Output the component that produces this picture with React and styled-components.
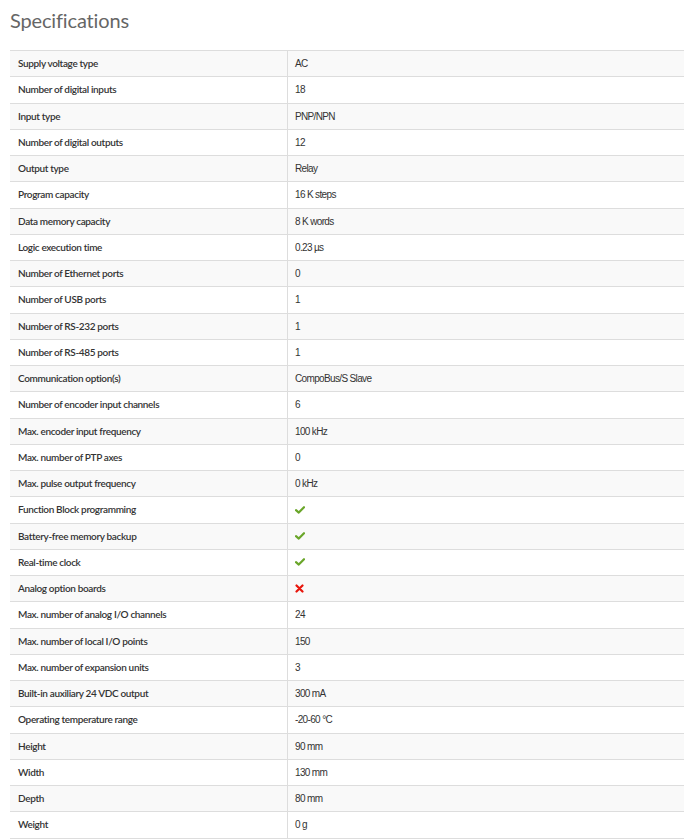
import React from 'react';
import styled, { createGlobalStyle } from 'styled-components';

const GlobalStyle = createGlobalStyle`
  html, body {
    margin: 0;
    padding: 0;
    background: #fff;
  }
`;

const Page = styled.div`
  padding: 0 0 0 10px;
  overflow: hidden;
`;

const Title = styled.h2`
  margin: 0;
  padding-top: 6px;
  height: 50px;
  box-sizing: border-box;
  font-family: Lato, 'Open Sans', sans-serif;
  font-weight: 400;
  font-size: 20px;
  letter-spacing: -0.15px;
  line-height: 28px;
  color: #666;
`;

const Table = styled.table`
  width: 100%;
  border-collapse: collapse;
  border-top: 1px solid #ddd;
`;

const Row = styled.tr`
  background: ${(props) => (props.$striped ? '#f9f9f9' : '#fff')};
  border-bottom: 1px solid #ddd;
`;

const Label = styled.td`
  width: 261px;
  padding: 5px 8px;
  height: 15.25px;
  line-height: 15.25px;
  font-family: Lato, 'Open Sans', sans-serif;
  font-weight: 600;
  font-size: 10px;
  letter-spacing: -0.35px;
  color: #333;
  vertical-align: middle;
`;

const Value = styled.td`
  padding: 5px 8px 5px 7px;
  line-height: 15.25px;
  border-left: 1px solid #ddd;
  font-family: 'Liberation Sans', Arial, sans-serif;
  font-size: 10px;
  letter-spacing: -0.65px;
  color: #333;
  vertical-align: middle;
`;

const Check = () => (
  <svg width="10" height="8" viewBox="0 0 10 8" style={{ display: 'block' }}>
    <path d="M1 4.2 L3.8 6.6 L9 1.2" fill="none" stroke="#6aa62a" strokeWidth="2.2" strokeLinecap="round" strokeLinejoin="round" />
  </svg>
);

const Cross = () => (
  <svg width="9" height="9" viewBox="0 0 9 9" style={{ display: 'block' }}>
    <path d="M1.5 1.5 L7.5 7.5 M7.5 1.5 L1.5 7.5" stroke="#e8160c" strokeWidth="2.2" strokeLinecap="round" />
  </svg>
);

const specs = [
  ['Supply voltage type', 'AC'],
  ['Number of digital inputs', '18'],
  ['Input type', 'PNP/NPN'],
  ['Number of digital outputs', '12'],
  ['Output type', 'Relay'],
  ['Program capacity', '16 K steps'],
  ['Data memory capacity', '8 K words'],
  ['Logic execution time', '0.23 µs'],
  ['Number of Ethernet ports', '0'],
  ['Number of USB ports', '1'],
  ['Number of RS-232 ports', '1'],
  ['Number of RS-485 ports', '1'],
  ['Communication option(s)', 'CompoBus/S Slave'],
  ['Number of encoder input channels', '6'],
  ['Max. encoder input frequency', '100 kHz'],
  ['Max. number of PTP axes', '0'],
  ['Max. pulse output frequency', '0 kHz'],
  ['Function Block programming', true],
  ['Battery-free memory backup', true],
  ['Real-time clock', true],
  ['Analog option boards', false],
  ['Max. number of analog I/O channels', '24'],
  ['Max. number of local I/O points', '150'],
  ['Max. number of expansion units', '3'],
  ['Built-in auxiliary 24 VDC output', '300 mA'],
  ['Operating temperature range', '-20-60 °C'],
  ['Height', '90 mm'],
  ['Width', '130 mm'],
  ['Depth', '80 mm'],
  ['Weight', '0 g'],
];

const renderValue = (v) => {
  if (v === true) return <Check />;
  if (v === false) return <Cross />;
  return v;
};

export default function App() {
  return (
    <>
      <GlobalStyle />
      <Page>
        <Title>Specifications</Title>
        <Table>
          <tbody>
            {specs.map(([label, value], i) => (
              <Row key={label} $striped={i % 2 === 0}>
                <Label>{label}</Label>
                <Value>{renderValue(value)}</Value>
              </Row>
            ))}
          </tbody>
        </Table>
      </Page>
    </>
  );
}
